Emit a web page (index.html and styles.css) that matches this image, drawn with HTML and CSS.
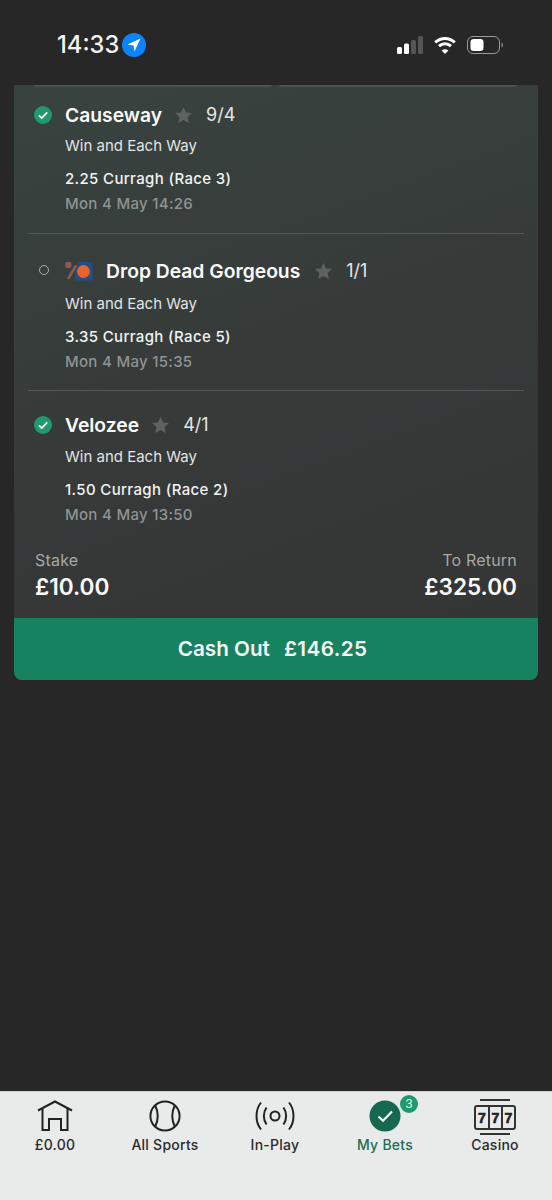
FILE: index.html
```html
<!DOCTYPE html>
<html lang="en">
<head>
    <meta charset="UTF-8">
    <meta name="viewport" content="width=device-width, initial-scale=1.0">
    <title>My Bets</title>
    <link rel="stylesheet" href="styles.css">
</head>
<body>
    <header class="status-bar">
        <div class="status-left">
            <span class="clock">14:33</span>
            <svg class="location" width="24" height="24" viewBox="0 0 24 24">
                <circle cx="12" cy="12" r="12" fill="#0a84ff"/>
                <path d="M18.5 5.5 L5.5 11.6 L11.6 12.4 L12.4 18.5 Z" fill="#fff"/>
            </svg>
        </div>
        <div class="status-right">
            <svg width="26" height="18" viewBox="0 0 26 18">
                <rect x="0" y="11" width="5" height="7" rx="1.5" fill="#fff"/>
                <rect x="7" y="7.5" width="5" height="10.5" rx="1.5" fill="#fff"/>
                <rect x="14" y="4" width="5" height="14" rx="1.5" fill="#555"/>
                <rect x="21" y="0" width="5" height="18" rx="1.5" fill="#555"/>
            </svg>
            <svg width="22" height="18" viewBox="0 0 22 18" fill="none" stroke="#fff" stroke-width="3">
                <path d="M1.2 6.4 C7 1.2 15 1.2 20.8 6.4"/>
                <path d="M5 10.2 C8.5 7 13.5 7 17 10.2"/>
                <path d="M11 18 L7.6 14.4 C9.6 12.8 12.4 12.8 14.4 14.4 Z" fill="#fff" stroke="none"/>
            </svg>
            <svg width="37" height="18" viewBox="0 0 37 18">
                <rect x="0.5" y="0.5" width="32" height="17" rx="5.5" fill="none" stroke="#9a9a9a"/>
                <rect x="3.5" y="3" width="13" height="12" rx="3.2" fill="#fff"/>
                <path d="M34.5 6.5 C36.5 7 36.5 11 34.5 11.5 Z" fill="#8a8a8a"/>
            </svg>
        </div>
    </header>

    <main class="bet-card">
        <div class="stubs">
            <span></span>
            <span></span>
        </div>

        <section class="leg">
            <div class="leg-title">
                <svg class="tick" width="18" height="18" viewBox="0 0 18 18">
                    <circle cx="9" cy="9" r="9" fill="#1f9a70"/>
                    <path d="M4.8 9.3 L7.8 12 L13.2 6.4" fill="none" stroke="#fff" stroke-width="1.8"/>
                </svg>
                <span class="runner">Causeway</span>
                <svg class="star" width="17" height="16" viewBox="0 0 17 16"><path d="M8.5 0 L11 5.4 L17 6.1 L12.5 10.1 L13.8 16 L8.5 13 L3.2 16 L4.5 10.1 L0 6.1 L6 5.4 Z"/></svg>
                <span class="odds">9/4</span>
            </div>
            <p class="market">Win and Each Way</p>
            <p class="race">2.25 Curragh (Race 3)</p>
            <p class="date">Mon 4 May 14:26</p>
        </section>

        <section class="leg leg-second">
            <div class="leg-title">
                <span class="open-dot"></span>
                <svg class="silk" width="28" height="20" viewBox="0 0 28 20">
                    <path d="M14 1 H24 Q27.5 1 27.5 5 V19.5 H10 V9 Z" fill="#1f4f86"/>
                    <circle cx="18.5" cy="10.5" r="6.4" fill="#e8642c"/>
                    <path d="M3 18 L11 4.5" stroke="#8f5a55" stroke-width="2.6"/>
                    <circle cx="3.3" cy="4" r="3.2" fill="#8f5a55"/>
                </svg>
                <span class="runner">Drop Dead Gorgeous</span>
                <svg class="star" width="17" height="16" viewBox="0 0 17 16"><path d="M8.5 0 L11 5.4 L17 6.1 L12.5 10.1 L13.8 16 L8.5 13 L3.2 16 L4.5 10.1 L0 6.1 L6 5.4 Z"/></svg>
                <span class="odds">1/1</span>
            </div>
            <p class="market">Win and Each Way</p>
            <p class="race">3.35 Curragh (Race 5)</p>
            <p class="date">Mon 4 May 15:35</p>
        </section>

        <section class="leg leg-third">
            <div class="leg-title">
                <svg class="tick" width="18" height="18" viewBox="0 0 18 18">
                    <circle cx="9" cy="9" r="9" fill="#1f9a70"/>
                    <path d="M4.8 9.3 L7.8 12 L13.2 6.4" fill="none" stroke="#fff" stroke-width="1.8"/>
                </svg>
                <span class="runner">Velozee</span>
                <svg class="star" width="17" height="16" viewBox="0 0 17 16"><path d="M8.5 0 L11 5.4 L17 6.1 L12.5 10.1 L13.8 16 L8.5 13 L3.2 16 L4.5 10.1 L0 6.1 L6 5.4 Z"/></svg>
                <span class="odds">4/1</span>
            </div>
            <p class="market">Win and Each Way</p>
            <p class="race">1.50 Curragh (Race 2)</p>
            <p class="date">Mon 4 May 13:50</p>
        </section>

        <div class="totals">
            <div>
                <p class="total-label">Stake</p>
                <p class="total-value">£10.00</p>
            </div>
            <div class="total-right">
                <p class="total-label">To Return</p>
                <p class="total-value">£325.00</p>
            </div>
        </div>

        <div class="cash-out">
            <span>Cash Out</span>
            <span class="cash-amount">£146.25</span>
        </div>
    </main>

    <nav class="tab-bar">
        <div class="tab">
            <svg width="36" height="32" viewBox="0 0 36 32" fill="none" stroke="#222" stroke-width="2">
                <path d="M1 10.5 L18 1.5 L35 10.5"/>
                <path d="M5.5 8 V30 H12 V19 H24 V30 H30.5 V8"/>
            </svg>
            <span>£0.00</span>
        </div>
        <div class="tab">
            <svg width="32" height="32" viewBox="0 0 32 32" fill="none" stroke="#222" stroke-width="2">
                <circle cx="16" cy="16" r="14.6"/>
                <path d="M6 5 C9.5 12 9.5 20 6 27"/>
                <path d="M26 5 C22.5 12 22.5 20 26 27"/>
            </svg>
            <span>All Sports</span>
        </div>
        <div class="tab">
            <svg width="40" height="32" viewBox="0 0 40 32" fill="none" stroke="#222" stroke-width="2">
                <circle cx="20" cy="16" r="4.5"/>
                <path d="M11.5 7.5 C8 12.5 8 19.5 11.5 24.5"/>
                <path d="M28.5 7.5 C32 12.5 32 19.5 28.5 24.5"/>
                <path d="M6 2.5 C0 10 0 22 6 29.5"/>
                <path d="M34 2.5 C40 10 40 22 34 29.5"/>
            </svg>
            <span>In-Play</span>
        </div>
        <div class="tab tab-active">
            <svg width="32" height="32" viewBox="0 0 32 32">
                <circle cx="16" cy="16" r="15.5" fill="#14694f"/>
                <path d="M9.5 16.5 L14 20.8 L23 11.5" fill="none" stroke="#fff" stroke-width="2.2"/>
            </svg>
            <span class="badge">3</span>
            <span>My Bets</span>
        </div>
        <div class="tab">
            <svg class="slot" width="42" height="36" viewBox="0 0 42 36" fill="none" stroke="#333" stroke-width="2">
                <path d="M6 1 H36 M6 35 H36"/>
                <rect x="1" y="7" width="40" height="23" rx="2"/>
                <path d="M15 7 V30 M28 7 V30"/>
                <text x="8" y="24" class="reel">7</text>
                <text x="21.5" y="24" class="reel">7</text>
                <text x="34.5" y="24" class="reel">7</text>
            </svg>
            <span>Casino</span>
        </div>
    </nav>
</body>
</html>
```

FILE: styles.css
```css
* {
    margin: 0;
    padding: 0;
    box-sizing: border-box;
}

body {
    width: 552px;
    height: 1200px;
    overflow: hidden;
    display: flex;
    flex-direction: column;
    background: #272727;
    font-family: 'Inter', 'Liberation Sans', sans-serif;
    color: #fff;
}

.status-bar {
    height: 85px;
    flex-shrink: 0;
    display: flex;
    justify-content: space-between;
    padding: 33px 48px 0 57px;
}

.status-left {
    display: flex;
    align-items: flex-start;
    gap: 3px;
}

.clock {
    font-size: 23.7px;
    line-height: 24px;
    font-weight: 500;
    color: #f4f4f4;
}

.status-right {
    display: flex;
    align-items: flex-start;
    gap: 11px;
    padding-top: 3px;
}

.bet-card {
    margin: 0 14px;
    height: 595px;
    flex-shrink: 0;
    display: flex;
    flex-direction: column;
    border-radius: 0 0 8px 8px;
    overflow: hidden;
    background: linear-gradient(160deg, #38433f 0%, #363a39 50%, #343434 100%);
}

.stubs {
    display: flex;
    gap: 7px;
    padding: 0 21px 0 20px;
}

.stubs span {
    flex: 1;
    height: 2px;
    border-radius: 0 0 3px 3px;
    background: #4b5250;
}

.leg {
    margin: 0 14px;
    height: 147px;
    padding-top: 16px;
    border-bottom: 1px solid #535857;
}

.leg-second {
    height: 157px;
    padding-top: 25px;
}

.leg-third {
    border-bottom: 0;
    height: 152px;
    padding-top: 22px;
}

.leg-title {
    display: flex;
    align-items: center;
    height: 24px;
    position: relative;
    padding-left: 37px;
}

.tick {
    position: absolute;
    left: 6px;
    top: 3px;
}

.open-dot {
    position: absolute;
    left: 11px;
    top: 6px;
    width: 10px;
    height: 10px;
    border: 1.5px solid #a8acab;
    border-radius: 50%;
}

.silk {
    margin-right: 13px;
}

.runner {
    font-size: 19.3px;
    font-weight: 600;
    line-height: 24px;
    color: #fafafa;
}

.star {
    margin-left: 13px;
    fill: #5c6361;
}

.leg-second .star {
    margin-left: 15px;
}

.odds {
    margin-left: 14px;
    font-size: 18px;
    line-height: 24px;
    color: #e4e6e5;
}

.market,
.race,
.date {
    margin-left: 37px;
    font-size: 15px;
    line-height: 20px;
}

.market {
    margin-top: 9px;
    color: #e2e4e3;
}

.leg-second .market {
    margin-top: 11px;
}

.leg-third .market {
    margin-top: 10px;
}

.race {
    margin-top: 13px;
    font-weight: 500;
    letter-spacing: 0.35px;
    color: #f2f3f3;
}

.date {
    margin-top: 5px;
    font-weight: 500;
    letter-spacing: 0.3px;
    color: #8f9392;
}

.totals {
    margin-top: 7px;
    padding: 0 21px;
    display: flex;
    justify-content: space-between;
}

.total-right {
    text-align: right;
}

.total-label {
    font-size: 16px;
    line-height: 20px;
    letter-spacing: 0.2px;
    color: #a5a8a7;
}

.total-value {
    margin-top: 3px;
    font-size: 22.6px;
    line-height: 28px;
    font-weight: 600;
    color: #fbfbfb;
}

.cash-out {
    margin-top: auto;
    height: 62px;
    display: flex;
    justify-content: center;
    align-items: center;
    gap: 14px;
    padding: 0 7px 2px 0;
    background: #178260;
    font-size: 20.7px;
    font-weight: 600;
    color: #f6f6f6;
}

.cash-amount {
    letter-spacing: 0.4px;
}

.tab-bar {
    margin-top: auto;
    height: 109px;
    display: flex;
    background: #e9eaea;
    border-top: 1px solid #cfd0d0;
}

.tab {
    position: relative;
    width: 110px;
    height: 61px;
    display: flex;
    flex-direction: column;
    justify-content: flex-end;
    align-items: center;
    gap: 4px;
    font-size: 14px;
    line-height: 17px;
    font-weight: 500;
    letter-spacing: 0.25px;
    color: #2a2a2a;
}

.tab-active {
    color: #1c6e55;
}

.slot {
    margin-bottom: -3px;
}

.badge {
    position: absolute;
    left: 70px;
    top: 3px;
    width: 18px;
    height: 18px;
    border-radius: 50%;
    background: #1f9a70;
    color: #e9f5f0;
    font-size: 12px;
    line-height: 18px;
    font-weight: 400;
    text-align: center;
}

.reel {
    font-family: 'Liberation Sans', sans-serif;
    font-size: 14px;
    font-weight: 700;
    fill: #222;
    stroke: #222;
    stroke-width: 0.6;
    text-anchor: middle;
}
```
